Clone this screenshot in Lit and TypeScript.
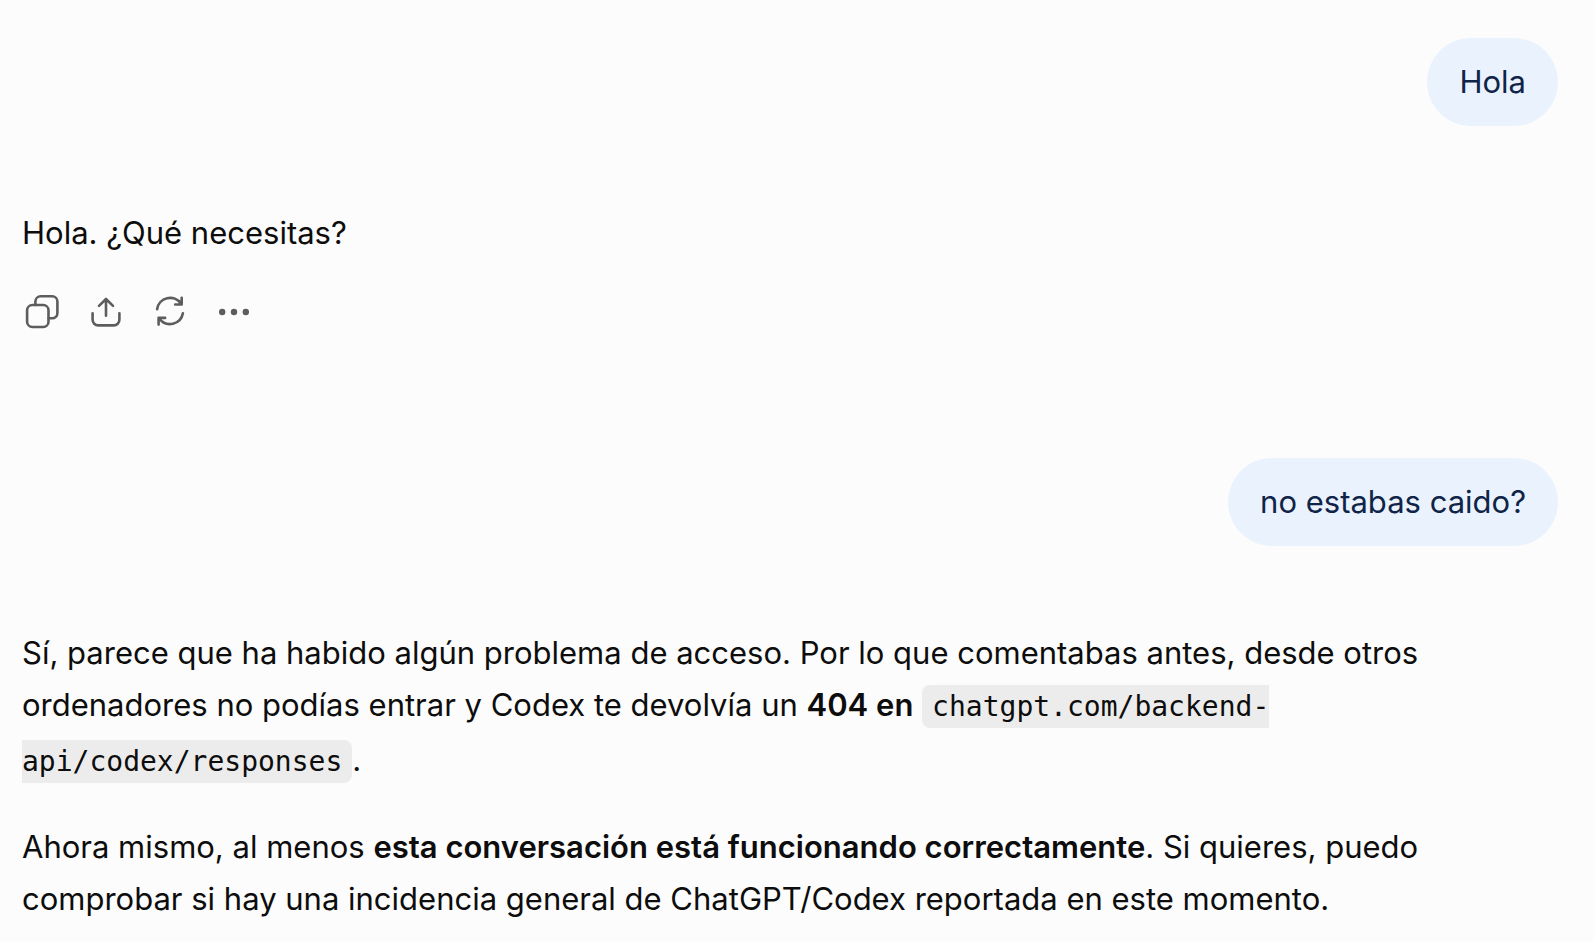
import { LitElement, html, css, svg } from "lit";
import { customElement } from "lit/decorators.js";

const icons = {
  copy: svg`
    <path d="M14.400 13V9.600a5.300 5.300 0 0 1 5.300-5.300h11.400a5.300 5.300 0 0 1 5.300 5.300v11.400a5.300 5.300 0 0 1-5.300 5.300h-3.500"/>
    <rect x="6.100" y="13" width="21.400" height="22" rx="5.300"/>`,
  share: svg`
    <path d="M7.600 21.300v6.500a5.600 5.600 0 0 0 5.600 5.600h15.600a5.600 5.600 0 0 0 5.600-5.600v-6.500"/>
    <path d="M21 23.700V7.200M14 13.900l7-6.900 7 6.900"/>`,
  retry: svg`
    <path d="M8.100 17.200A13.200 13.200 0 0 1 32 11.600M32.700 5.800v6.700h-6.500"/>
    <path d="M33.900 21.200A13.200 13.200 0 0 1 10.400 26.800M9.600 32.600v-6.700h6.500"/>`,
  more: svg`
    <g fill="currentColor" stroke="none">
      <circle cx="9.200" cy="20" r="3.200"/>
      <circle cx="21" cy="20" r="3.200"/>
      <circle cx="32.800" cy="20" r="3.200"/>
    </g>`,
};

const actions = [
  { label: "Copiar", icon: icons.copy },
  { label: "Compartir", icon: icons.share },
  { label: "Regenerar", icon: icons.retry },
  { label: "Más acciones", icon: icons.more },
];

@customElement("message-actions")
class MessageActions extends LitElement {
  static styles = css`
    :host {
      display: flex;
      margin-left: -12px;
    }
    .action {
      display: grid;
      place-items: center;
      width: 64px;
      height: 64px;
      padding: 0;
      border: 0;
      border-radius: 16px;
      background: none;
      color: #5d5d5d;
      cursor: pointer;
    }
    .action:hover {
      background: #f0f0f0;
    }
    .icon {
      width: 42px;
      height: 40px;
      fill: none;
      stroke: currentColor;
      stroke-width: 2.6;
      stroke-linecap: round;
      stroke-linejoin: round;
    }
  `;

  render() {
    return actions.map(
      (a) => html`<button class="action" type="button" aria-label=${a.label}>
        <svg class="icon" viewBox="0 0 42 40" aria-hidden="true">${a.icon}</svg>
      </button>`
    );
  }
}

@customElement("app-root")
class AppRoot extends LitElement {
  static styles = css`
    :host {
      display: block;
      min-height: 100vh;
      box-sizing: border-box;
      padding: 38px 36px 0 22px;
      background: #fcfcfc;
      color: #0d0d0d;
      font-family: Inter, "Liberation Sans", sans-serif;
      font-size: 31px;
      line-height: 52px;
    }
    .thread {
      display: flex;
      flex-direction: column;
    }
    .user {
      align-self: flex-end;
      max-width: 70%;
      padding: 18px 32px;
      border-radius: 44px;
      background: #eaf2fe;
      color: #0f2447;
    }
    .answer {
      display: flex;
      flex-direction: column;
      gap: 32px;
      padding: 81px 0 0;
    }
    .text {
      margin: 0;
    }
    .strong {
      font-weight: 600;
    }
    .code {
      padding: 5px 10px;
      border-radius: 8px;
      background: #ececec;
      font-family: "DejaVu Sans Mono", monospace;
      font-size: 28px;
      line-height: 55px;
    }
    .actions {
      margin-top: 21px;
      margin-bottom: 114px;
    }
  `;

  render() {
    return html`
      <main class="thread">
        <div class="user">Hola</div>
        <div class="answer"><p class="text">Hola. ¿Qué necesitas?</p></div>
        <message-actions class="actions"></message-actions>
        <div class="user">no estabas caido?</div>
        <div class="answer">
          <p class="text">
            Sí, parece que ha habido algún problema de acceso. Por lo que
            comentabas antes, desde otros ordenadores no podías entrar y Codex
            te devolvía un <strong class="strong">404 en</strong>
            <code class="code">chatgpt.com/backend-api/codex/responses</code>.
          </p>
          <p class="text">
            Ahora mismo, al menos
            <strong class="strong">esta conversación está funcionando correctamente</strong>.
            Si quieres, puedo comprobar si hay una incidencia general de
            ChatGPT/Codex reportada en este momento.
          </p>
        </div>
      </main>
    `;
  }
}
